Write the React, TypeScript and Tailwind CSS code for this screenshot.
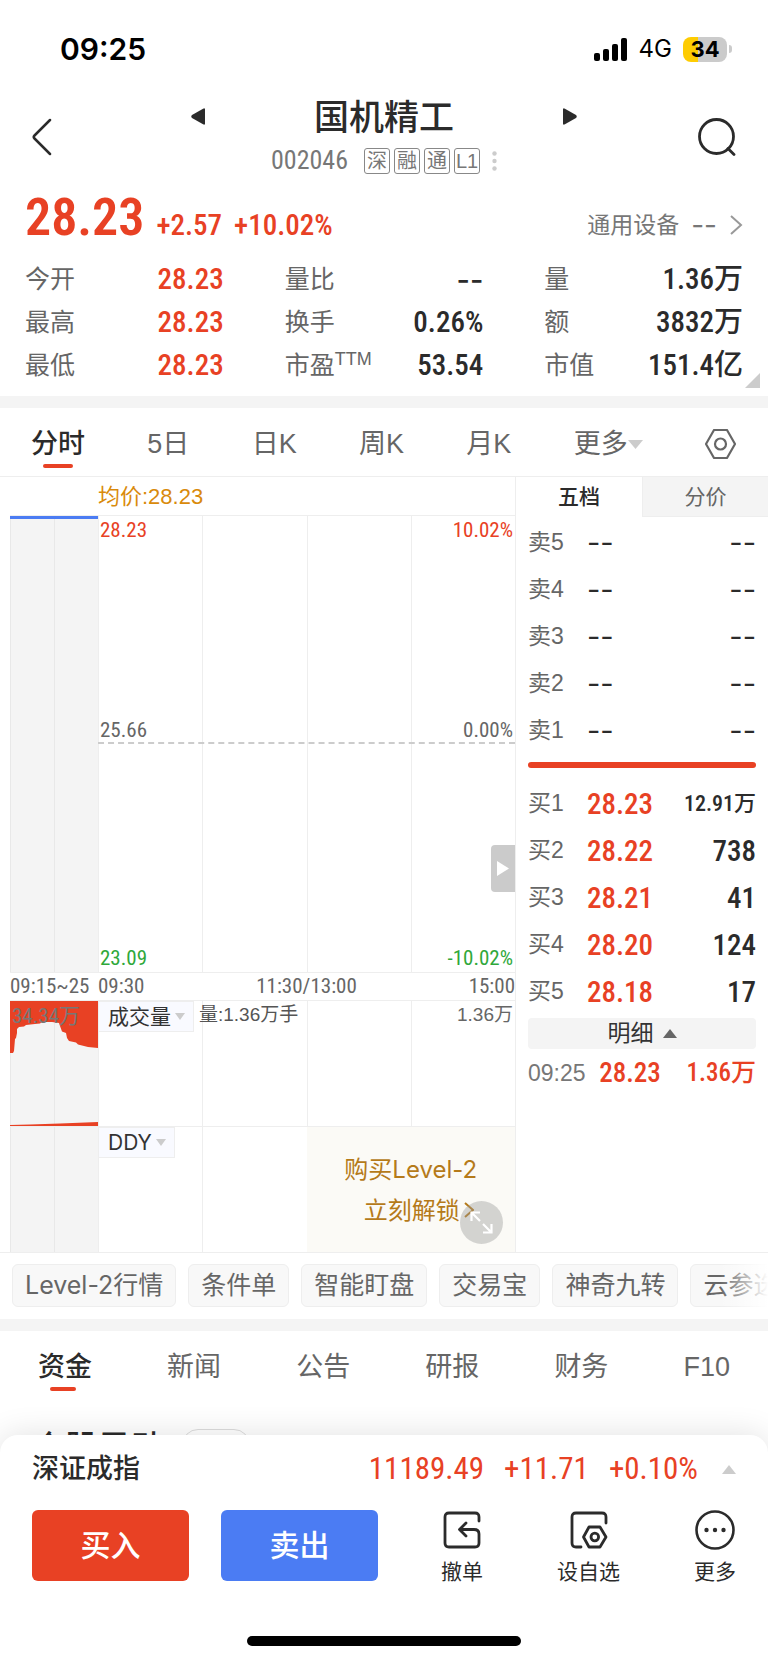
import type { ReactNode } from 'react';

const statRows = [
  [
    { label: '今开', value: '28.23', red: true },
    { label: '量比', value: '--' },
    { label: '量', value: '1.36万' },
  ],
  [
    { label: '最高', value: '28.23', red: true },
    { label: '换手', value: '0.26%' },
    { label: '额', value: '3832万' },
  ],
  [
    { label: '最低', value: '28.23', red: true },
    { label: '市盈', sup: 'TTM', value: '53.54' },
    { label: '市值', value: '151.4亿' },
  ],
];

const periods = ['分时', '5日', '日K', '周K', '月K'];
const asks = ['卖5', '卖4', '卖3', '卖2', '卖1'];
const bids = [
  { label: '买1', price: '28.23', volume: '12.91万' },
  { label: '买2', price: '28.22', volume: '738' },
  { label: '买3', price: '28.21', volume: '41' },
  { label: '买4', price: '28.20', volume: '124' },
  { label: '买5', price: '28.18', volume: '17' },
];
const chips = ['Level-2行情', '条件单', '智能盯盘', '交易宝', '神奇九转', '云参选股'];
const infoTabs = ['资金', '新闻', '公告', '研报', '财务', 'F10'];

const num = "font-['Roboto_Condensed','Roboto','Noto_Sans_CJK_SC',sans-serif]";
const inter = "font-['Inter','Noto_Sans_CJK_SC',sans-serif]";

function StatusBar() {
  return (
    <div className={`${inter} flex h-[98px] items-center justify-between pl-[60px] pr-9 text-black`}>
      <span className="text-[30px] font-semibold">09:25</span>
      <div className="flex items-center gap-[11px]">
        <svg width="34" height="23" viewBox="0 0 34 23" fill="currentColor">
          <rect x="0" y="15" width="6" height="8" rx="2" />
          <rect x="9" y="11" width="6" height="12" rx="2" />
          <rect x="18" y="6" width="6" height="17" rx="2" />
          <rect x="27" y="0" width="6" height="23" rx="2" />
        </svg>
        <span className="text-2xl">4G</span>
        <div className="flex items-center gap-[2px]">
          <div className="flex h-[25px] w-11 items-center justify-center rounded-[8px] bg-[linear-gradient(90deg,#fecc02_35%,#cbcbcb_35%)]">
            <span className="text-[22px] font-bold">34</span>
          </div>
          <div className="h-2 w-[3px] rounded-r-full bg-[#cbcbcb]" />
        </div>
      </div>
    </div>
  );
}

function Header() {
  return (
    <header className="flex h-[82px] items-center justify-between px-8">
      <button aria-label="返回" className="w-[38px] pb-1">
        <svg width="20" height="38" viewBox="0 0 20 38" fill="none" stroke="currentColor" strokeWidth="2.5" strokeLinecap="round">
          <path d="M18 2 L2.5 17.5 Q1 19 2.5 20.5 L18 36" />
        </svg>
      </button>
      <div className="flex w-[386px] flex-col items-center">
        <div className="flex w-full items-center justify-between">
          <button aria-label="上一只" className="pb-1">
            <svg width="15" height="17" viewBox="0 0 15 17" fill="currentColor">
              <path d="M14 0.5 V16.5 H12.5 L1 10 Q-0.5 8.5 1 7 L12.5 0.5 Z" />
            </svg>
          </button>
          <h1 className="text-[35px] font-medium leading-10">国机精工</h1>
          <button aria-label="下一只" className="pb-1">
            <svg width="15" height="17" viewBox="0 0 15 17" fill="currentColor">
              <path d="M1 0.5 V16.5 H2.5 L14 10 Q15.5 8.5 14 7 L2.5 0.5 Z" />
            </svg>
          </button>
        </div>
        <div className="flex h-[42px] items-center pt-[3px] text-[#777]">
          <span className={`${num} text-[26px]`}>002046</span>
          <div className="ml-4 flex gap-1 text-xl">
            {['深', '融', '通', 'L1'].map((tag) => (
              <span key={tag} className="flex size-[26px] items-center justify-center rounded-[3px] border border-[#888] leading-none">
                {tag}
              </span>
            ))}
          </div>
          <svg className="ml-3" width="5" height="20" viewBox="0 0 5 20" fill="#ccc">
            <circle cx="2.5" cy="2.5" r="2.2" />
            <circle cx="2.5" cy="10" r="2.2" />
            <circle cx="2.5" cy="17.5" r="2.2" />
          </svg>
        </div>
      </div>
      <button aria-label="搜索" className="pb-1">
        <svg width="38" height="38" viewBox="0 0 38 38" fill="none" stroke="currentColor" strokeWidth="2.8" strokeLinecap="round">
          <circle cx="18.5" cy="18.5" r="17" />
          <path d="M30 30.5 L36 36.5" />
        </svg>
      </button>
    </header>
  );
}

function Quote() {
  return (
    <section className="relative h-[216px] px-[25px]">
      <div className="flex h-[78px] items-center justify-between">
        <div className={`${num} flex items-baseline pb-[2px] text-[#e84124]`}>
          <span className="text-[52px] font-semibold">28.23</span>
          <span className="ml-3 text-[29px] font-medium">+2.57</span>
          <span className="ml-3 text-[29px] font-medium">+10.02%</span>
        </div>
        <a href="#sector" className="flex items-center pt-3 text-[23px] text-[#777]">
          通用设备
          <span className={`${inter} ml-3 text-[28px] leading-8`}>--</span>
          <svg className="ml-3" width="14" height="20" viewBox="0 0 14 20" fill="none" stroke="#999" strokeWidth="2">
            <path d="M2 1 L12 10 L2 19" />
          </svg>
        </a>
      </div>
      <div className="grid grid-cols-3 gap-x-[61px]">
        {statRows.flat().map((s) => (
          <div key={s.label} className="flex h-[43px] items-center justify-between">
            <span className="text-[25px] text-[#666]">
              {s.label}
              {s.sup && <sup className="text-lg">{s.sup}</sup>}
            </span>
            <span className={`${s.value === '--' ? inter : num} text-[29px] font-medium ${s.red ? 'text-[#e84124]' : 'text-[#2b2b2b]'}`}>
              {s.value}
            </span>
          </div>
        ))}
      </div>
      <svg className="absolute bottom-2 right-2" width="15" height="15" viewBox="0 0 15 15" fill="#ccc">
        <path d="M15 0 V15 H0 Z" />
      </svg>
    </section>
  );
}

function PeriodTabs() {
  return (
    <nav className="flex h-[69px] items-center justify-between border-b border-[#eee] pl-[31px] pr-8 pt-1 text-[27px] text-[#666]">
      {periods.map((p, i) => (
        <button key={p} className={`relative ${i === 0 ? 'font-medium text-[#2b2b2b]' : ''}`}>
          {p}
          {i === 0 && <span className="absolute -bottom-1 left-3 right-3 h-1 rounded-full bg-[#e84124]" />}
        </button>
      ))}
      <button className="flex items-center">
        更多
        <svg width="15" height="9" viewBox="0 0 15 9" fill="#ccc">
          <path d="M0 0 H15 L7.5 9 Z" />
        </svg>
      </button>
      <button aria-label="设置">
        <svg width="31" height="30" viewBox="0 0 31 30" fill="none" stroke="currentColor" strokeWidth="2.2" strokeLinejoin="round">
          <path d="M9 1 H22 L30 15 L22 29 H9 L1 15 Z" />
          <circle cx="15.5" cy="15" r="5.5" />
        </svg>
      </button>
    </nav>
  );
}

function Panel({ height, pre, children }: { height: string; pre?: ReactNode; children?: ReactNode }) {
  return (
    <div className={`flex border-t border-[#eee] ${height}`}>
      <div className="relative grid w-[88px] grid-cols-2 bg-[#f4f4f4]">
        <div className="border-l border-[#e8e8e8]" />
        <div className="border-l border-[#e8e8e8]" />
        {pre}
      </div>
      <div className="relative grid flex-1 grid-cols-4">
        <div className="border-l border-[#eee]" />
        <div className="border-l border-[#eee]" />
        <div className="border-l border-[#eee]" />
        <div className="border-l border-[#eee]" />
        {children}
      </div>
    </div>
  );
}

function IndicatorButton({ name }: { name: string }) {
  return (
    <button className={`${inter} absolute left-0 top-0 flex h-[31px] items-center gap-1 border border-[#eee] bg-[#f9faff] pl-[9px] pr-2 text-[21px] text-[#333]`}>
      {name}
      <svg width="10" height="7" viewBox="0 0 10 7" fill="#ccc">
        <path d="M0 0 H10 L5 7 Z" />
      </svg>
    </button>
  );
}

function Chart() {
  return (
    <section className="flex-1 border-r border-[#eee] pl-[10px]">
      <div className="flex h-[38px] items-center pl-[88px] text-[22px] text-[#d98a0b]">均价:28.23</div>
      <Panel
        height="h-[457px]"
        pre={<div className="absolute inset-x-0 top-0 h-[3px] bg-[#4b7cf3]" />}
      >
        <div className={`${num} absolute inset-0 text-[21px] leading-7`}>
          <div className="flex justify-between px-[2px] text-[#e84124]">
            <span>28.23</span>
            <span>10.02%</span>
          </div>
          <div className="absolute inset-x-0 bottom-1/2 border-b-2 border-dashed border-[#ccc]">
            <div className="flex h-[26px] justify-between px-[2px] text-[#666]">
              <span>25.66</span>
              <span>0.00%</span>
            </div>
          </div>
          <div className="absolute inset-x-0 bottom-0 flex justify-between px-[2px] text-[#2fa83a]">
            <span>23.09</span>
            <span>-10.02%</span>
          </div>
        </div>
        <button aria-label="收起盘口" className="absolute right-0 top-[329px] flex h-[47px] w-6 items-center justify-center rounded-l-[4px] bg-[#cbcbcb]">
          <svg width="12" height="15" viewBox="0 0 12 15" fill="#fff">
            <path d="M0 0 L12 7.5 L0 15 Z" />
          </svg>
        </button>
      </Panel>
      <div className={`${num} flex h-7 items-center border-t border-[#eee] text-[21px] text-[#666]`}>
        <span className="w-[88px]">09:15~25</span>
        <div className="grid flex-1 grid-cols-3">
          <span>09:30</span>
          <span className="text-center">11:30/13:00</span>
          <span className="text-right">15:00</span>
        </div>
      </div>
      <Panel
        height="h-[126px]"
        pre={
          <>
            <svg className="absolute inset-0" width="89" height="125" viewBox="0 0 89 125" fill="#e84124">
              <path d="M0 0 H89 V125 H0 V124 L20 123.5 L50 122.5 L88 121 V47 L78 46 L68 43.5 L66 41.5 L59 40 L57 37 L56 32 L52 30.5 L50 25 L49 22 L42 21 L32 21 L30 22.5 L25 23 L16 24 L14 25.5 L9 26 L7 28 V32 L6 37 L5 38 L4 50 L3 52 H0 Z" />
            </svg>
            <span className={`${num} absolute left-[2px] top-0 text-[21px] text-[#777]`}>34.34万</span>
          </>
        }
      >
        <IndicatorButton name="成交量" />
        <span className="absolute left-[101px] top-0 text-[19px] leading-7 text-[#555]">量:1.36万手</span>
        <span className="absolute right-[2px] top-0 text-[19px] leading-7 text-[#666]">1.36万</span>
      </Panel>
      <Panel height="h-[126px]">
        <IndicatorButton name="DDY" />
        <a href="#level2" className={`${inter} absolute inset-y-0 left-1/2 right-0 flex flex-col items-center justify-center bg-[#fbfaf6] text-2xl text-[#b57a1a]`}>
          <span className="leading-[41px]">购买Level-2</span>
          <span className="flex items-center gap-1 pl-4 leading-[41px]">
            立刻解锁
            <svg width="10" height="16" viewBox="0 0 10 16" fill="none" stroke="currentColor" strokeWidth="2">
              <path d="M1 1 L9 8 L1 15" />
            </svg>
          </span>
        </a>
        <button aria-label="全屏" className="absolute bottom-2 right-3 flex size-[43px] items-center justify-center rounded-full bg-[#999]/40">
          <svg width="23" height="23" viewBox="0 0 23 23" fill="none" stroke="#fff" strokeWidth="2.2">
            <path d="M1.5 10 V1.5 H10 M1.5 1.5 L10 10 M21.5 13 V21.5 H13 M21.5 21.5 L13 13" />
          </svg>
        </button>
      </Panel>
    </section>
  );
}

function OrderBook() {
  return (
    <section className="w-[252px]">
      <div className="grid h-10 grid-cols-2 text-[21px]">
        <button className="font-medium text-[#2b2b2b]">五档</button>
        <button className="border-b border-l border-[#eee] bg-[#f4f4f4] text-[#666]">分价</button>
      </div>
      <div className="px-3">
        <table className="mt-[2px] w-full">
          <tbody>
            {asks.map((label) => (
              <tr key={label} className="h-[47px]">
                <th className="w-[59px] text-left text-[23px] font-normal text-[#666]">{label}</th>
                <td className={`${inter} text-[29px] leading-8 text-[#2b2b2b]`}>--</td>
                <td className={`${inter} text-right text-[29px] leading-8 text-[#2b2b2b]`}>--</td>
              </tr>
            ))}
          </tbody>
        </table>
        <div className="mt-2 h-[6px] rounded-full bg-[#e84124]" />
        <table className="mt-3 w-full">
          <tbody>
            {bids.map((bid) => (
              <tr key={bid.label} className="h-[47px]">
                <th className="w-[59px] text-left text-[23px] font-normal text-[#666]">{bid.label}</th>
                <td className={`${num} text-[29px] font-medium leading-10 text-[#e84124]`}>{bid.price}</td>
                <td className={`${num} text-right font-medium leading-10 text-[#2b2b2b] ${bid.volume.includes('万') ? 'text-[22px]' : 'text-[29px]'}`}>
                  {bid.volume}
                </td>
              </tr>
            ))}
          </tbody>
        </table>
        <button className="mt-[3px] flex h-[31px] w-full items-center justify-center gap-[9px] rounded-[4px] bg-[#f4f4f4] text-[23px] text-[#333]">
          明细
          <svg width="14" height="9" viewBox="0 0 14 9" fill="#666">
            <path d="M0 9 L7 0 L14 9 Z" />
          </svg>
        </button>
        <div className={`${num} flex h-12 items-center justify-between font-medium text-[#e84124]`}>
          <span className="font-['Liberation_Sans'] text-[23px] font-normal text-[#777]">09:25</span>
          <span className="text-[27px]">28.23</span>
          <span className="pl-3 text-[25px]">1.36万</span>
        </div>
      </div>
    </section>
  );
}

function Chips() {
  return (
    <div className="relative flex h-[67px] gap-3 overflow-hidden border-t border-[#eee] px-3 pt-[11px]">
      {chips.map((chip) => (
        <button key={chip} className={`${inter} h-[43px] shrink-0 whitespace-nowrap rounded-[6px] border border-[#eee] bg-[#f8f8f8] px-3 text-[25px] text-[#666]`}>
          {chip}
        </button>
      ))}
      <div className="absolute inset-y-0 right-0 w-12 bg-linear-to-r from-white/0 to-white" />
    </div>
  );
}

function InfoTabs() {
  return (
    <nav className="flex h-[72px] items-center justify-between px-[38px] text-[27px] text-[#666]">
      {infoTabs.map((tab, i) => (
        <button key={tab} className={`relative ${i === 0 ? 'font-medium text-[#2b2b2b]' : ''}`}>
          {tab}
          {i === 0 && <span className="absolute -bottom-1 left-3 h-1 w-[26px] rounded-full bg-[#e84124]" />}
        </button>
      ))}
    </nav>
  );
}

function BottomSheet() {
  return (
    <footer className="relative rounded-t-[18px] bg-white shadow-[0_0_32px_rgba(0,0,0,0.12)]">
      <div className="flex h-[75px] items-center justify-between px-8 pb-[6px]">
        <span className="text-[27px] font-medium text-[#2b2b2b]">深证成指</span>
        <div className={`${num} flex items-center gap-5 text-[31px] text-[#e84124]`}>
          <span>11189.49</span>
          <span>+11.71</span>
          <span>+0.10%</span>
          <button aria-label="展开指数" className="pl-1">
            <svg width="14" height="9" viewBox="0 0 14 9" fill="#ccc">
              <path d="M0 9 L7 0 L14 9 Z" />
            </svg>
          </button>
        </div>
      </div>
      <div className="flex h-[75px] items-start px-8">
        <div className="flex gap-8 text-[30px] font-medium text-white">
          <button className="h-[71px] w-[157px] rounded-[6px] bg-[#e84124]">买入</button>
          <button className="h-[71px] w-[157px] rounded-[6px] bg-[#4b7cf3]">卖出</button>
        </div>
        <div className="ml-[63px] flex flex-1 justify-between text-[21px] leading-6 text-[#2b2b2b]">
          <button className="flex flex-col items-center gap-[10px]">
            <svg width="40" height="40" viewBox="0 0 40 40" fill="none" stroke="currentColor" strokeWidth="2.8" strokeLinecap="round" strokeLinejoin="round">
              <path d="M37 11 V7 Q37 3 33 3 H7 Q3 3 3 7 V33 Q3 37 7 37 H33 Q37 37 37 33 V24 Q37 19.5 32 19.5 H18 M24 13 L17.5 19.5 L24 26" />
            </svg>
            撤单
          </button>
          <button className="flex flex-col items-center gap-[10px]">
            <svg width="40" height="40" viewBox="0 0 40 40" fill="none" stroke="currentColor" strokeWidth="2.8" strokeLinecap="round" strokeLinejoin="round">
              <path d="M37 13 V7 Q37 3 33 3 H7 Q3 3 3 7 V33 Q3 37 7 37 H12" />
              <path d="M20 17 H31 L37 27 L31 37 H20 L14.5 27 Z" />
              <circle cx="25.8" cy="27" r="3.8" />
            </svg>
            设自选
          </button>
          <button className="flex flex-col items-center gap-[10px]">
            <svg width="40" height="40" viewBox="0 0 40 40" fill="none" stroke="currentColor" strokeWidth="2.6">
              <circle cx="20" cy="20" r="18.5" />
              <g fill="currentColor" stroke="none">
                <circle cx="11.5" cy="20" r="2.2" />
                <circle cx="20" cy="20" r="2.2" />
                <circle cx="28.5" cy="20" r="2.2" />
              </g>
            </svg>
            更多
          </button>
        </div>
      </div>
      <div className="flex justify-center pb-[17px] pt-[51px]">
        <div className="h-[10px] w-[274px] rounded-full bg-black" />
      </div>
    </footer>
  );
}

export default function App() {
  return (
    <div className="min-h-screen overflow-hidden bg-white font-['Liberation_Sans','Noto_Sans_CJK_SC',sans-serif] text-[#2b2b2b]">
      <StatusBar />
      <Header />
      <Quote />
      <div className="h-3 bg-[#f4f4f4]" />
      <PeriodTabs />
      <div className="flex">
        <Chart />
        <OrderBook />
      </div>
      <Chips />
      <div className="h-3 bg-[#f4f4f4]" />
      <InfoTabs />
      <div className="flex h-8 items-start overflow-hidden px-8 pt-[26px]">
        <h2 className="text-[33px] font-medium leading-[38px]">个股异动</h2>
        <span className="ml-[18px] h-8 w-[68px] shrink-0 rounded-full border border-[#ddd]" />
      </div>
      <BottomSheet />
    </div>
  );
}
